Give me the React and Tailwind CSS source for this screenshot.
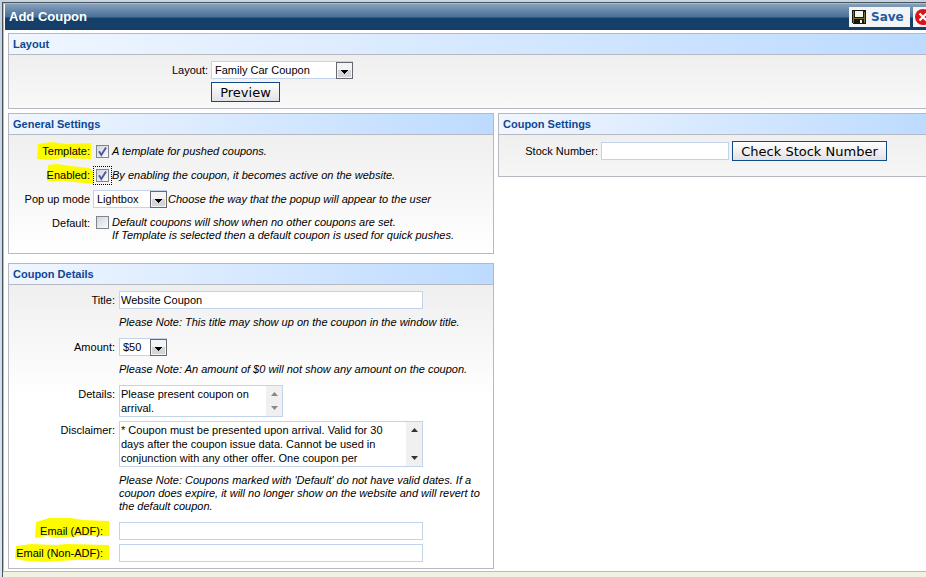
import React from "react";

function Panel({ title, className = "", bodyClass = "", children }) {
  return (
    <section className={"border border-[#b6b9bf] " + className}>
      <h2 className="flex h-[21px] items-center border-b border-[#b6b9bf] bg-linear-to-r from-[#f0f6ff] to-[#bddbff] px-1 text-[11px] font-bold text-[#0d4793]">
        {title}
      </h2>
      <div className={"bg-linear-to-b from-[#efefef] " + bodyClass}>{children}</div>
    </section>
  );
}

function Select({ id, value, className }) {
  return (
    <span className={"relative block h-[18px] shrink-0 " + className}>
      <select id={id} className="block h-full w-full appearance-none border border-[#c2d3ea] bg-white pl-[3px] text-[11px] text-black outline-none">
        <option>{value}</option>
      </select>
      <svg viewBox="0 0 17 17" className="pointer-events-none absolute right-0 top-px h-[17px] w-[17px]" shapeRendering="crispEdges">
        <rect x="0.5" y="0.5" width="16" height="16" fill="#f4f4f4" stroke="#66696f" />
        <path d="M2 8h13v7H2z" fill="#d3d5d8" />
        <path d="M5 8h7v1H5zM6 9h5v1H6zM7 10h3v1H7zM8 11h1v1H8z" fill="#000" />
      </svg>
    </span>
  );
}

function Checkbox({ id, checked, focused }) {
  return (
    <span className={"relative flex h-[19px] w-[19px] shrink-0 items-center justify-center border border-dotted " + (focused ? "border-black" : "border-transparent")}>
      <input id={id} type="checkbox" defaultChecked={checked} className="peer block h-[13px] w-[13px] appearance-none border border-[#7f858d] bg-linear-to-br from-[#d2d6df] to-[#fafafa] outline-none" />
      <svg viewBox="0 0 13 13" className="pointer-events-none absolute hidden h-[13px] w-[13px] peer-checked:block">
        <path d="M3 6.2 5.3 10 10 2.6" fill="none" stroke="#4a5a97" strokeWidth="1.9" />
      </svg>
    </span>
  );
}

function ScrollBar({ active }) {
  return (
    <span className={"flex w-4 shrink-0 flex-col items-center justify-between bg-[#f0f0f0] py-[6px] " + (active ? "text-[#333]" : "text-[#888]")}>
      <svg viewBox="0 0 7 4" className="h-1 w-[7px]"><path d="M0 4 3.5 0 7 4z" fill="currentColor" /></svg>
      <svg viewBox="0 0 7 4" className="h-1 w-[7px]"><path d="M0 0 3.5 4 7 0z" fill="currentColor" /></svg>
    </span>
  );
}

function TextArea({ id, value, active, className }) {
  return (
    <div className={"flex border border-[#c2d3ea] bg-white " + className}>
      <textarea id={id} defaultValue={value} className="block h-full min-w-0 flex-1 resize-none overflow-hidden px-px pt-px text-[11px] leading-[14px] outline-none" />
      <ScrollBar active={active} />
    </div>
  );
}

function Marker({ d, viewBox, className }) {
  return (
    <svg viewBox={viewBox} className={"absolute -z-10 " + className}>
      <path d={d} fill="#fdfb00" />
    </svg>
  );
}

function Note({ children, className = "" }) {
  return <p className={"text-[11px] italic leading-[13px] " + className}>{children}</p>;
}

const inputClass = "block h-[18px] border border-[#c2d3ea] bg-white px-px text-[11px] text-black outline-none";
const buttonClass = "block h-5 border border-[#114a8b] bg-linear-to-b from-white to-[#e2e2e6] pt-px text-[13px] leading-[18px] text-black font-['DejaVu_Sans',sans-serif]";
const generalLabel = "relative z-0 w-[81px] shrink-0 text-right leading-6";
const detailLabel = "relative z-0 w-[106px] shrink-0 text-right leading-[19px]";

export default function App() {
  return (
    <div className="flex min-h-screen flex-col overflow-hidden bg-linear-to-b from-[#c5d4e2] to-[#dbe5f2] pl-[2px] pt-[2px] text-[11px] text-black font-['Liberation_Sans',Arial,sans-serif]">
      <div className="flex flex-1 flex-col border-l border-t border-[#4a5358] bg-[#f1f1e1]">
        <main className="border-b border-l border-t border-[#b9bcbd] bg-white pb-[2px]">
          <header className="ml-px flex h-[26px] items-center justify-between overflow-hidden bg-linear-to-b from-[#86a0bd] from-0% via-[#4b7299] via-48% to-[#153f68] to-56% pl-1">
            <h1 className="text-[13px] font-bold text-white">Add Coupon</h1>
            <div className="flex h-5 gap-[3px]">
              <button className="flex h-5 w-[61px] items-center gap-[5px] bg-[#f2f4f6] pl-[3px] text-[12px] font-bold text-[#1f58a4] font-['DejaVu_Sans',sans-serif]">
                <svg viewBox="0 0 14 14" className="h-[14px] w-[14px] shrink-0" shapeRendering="crispEdges">
                  <path d="M0 0h14v14H1L0 13z" fill="#17170c" />
                  <path d="M1 1h1v12H1zM12 2h1v11h-1zM2 8h10v1H2z" fill="#74713a" />
                  <path d="M3 1h8v6H3z" fill="#f4f4ef" />
                  <path d="M8 10h2v3H8z" fill="#f4f4ef" />
                </svg>
                Save
              </button>
              <button aria-label="Close" className="flex h-5 w-[13px] items-center overflow-hidden bg-[#f2f4f6] pl-[2px]">
                <svg viewBox="0 0 16 16" className="h-4 w-4 shrink-0">
                  <circle cx="8" cy="8" r="8" fill="#df1118" />
                  <path d="m4.5 4.5 7 7m0-7-7 7" stroke="#fff" strokeWidth="2.2" />
                </svg>
              </button>
            </div>
          </header>

          <div className="pl-1 pt-[3px]">
            <Panel title="Layout" className="border-r-0" bodyClass="to-[#f8f8f8] pt-[6px] pb-[6px]">
              <div className="flex gap-[3px]">
                <label htmlFor="layout" className="w-[199px] shrink-0 text-right leading-[18px]">Layout:</label>
                <div className="flex flex-col items-start gap-[3px]">
                  <Select id="layout" value="Family Car Coupon" className="w-[142px]" />
                  <button className={buttonClass + " w-[69px]"}>Preview</button>
                </div>
              </div>
            </Panel>

            <div className="mt-1 flex items-start gap-1">
              <div className="flex w-[486px] shrink-0 flex-col gap-[9px]">
                <Panel title="General Settings" bodyClass="to-white pt-1 pb-[11px]">
                  <div className="flex h-6 items-center gap-[3px]">
                    <label htmlFor="template" className={generalLabel}>
                      Template:
                      <Marker viewBox="0 0 54 18" className="-right-px top-[3px] h-[18px] w-[54px]" d="M1 2 14 0 30 2 54 1V17L25 16 14 18 0 17z" />
                    </label>
                    <div className="flex items-center">
                      <Checkbox id="template" checked />
                      <Note>A template for pushed coupons.</Note>
                    </div>
                  </div>
                  <div className="flex h-6 items-center gap-[3px]">
                    <label htmlFor="enabled" className={generalLabel}>
                      Enabled:
                      <Marker viewBox="0 0 46 20" className="-right-[3px] top-px h-5 w-[46px]" d="M1 1 10 0 24 2 42 4 46 7V20L18 17H0z" />
                    </label>
                    <div className="flex items-center">
                      <Checkbox id="enabled" checked focused />
                      <Note>By enabling the coupon, it becomes active on the website.</Note>
                    </div>
                  </div>
                  <div className="flex h-6 items-center gap-[3px]">
                    <label htmlFor="popup" className={generalLabel}>Pop up mode</label>
                    <div className="flex items-center gap-px">
                      <Select id="popup" value="Lightbox" className="w-[74px]" />
                      <Note>Choose the way that the popup will appear to the user</Note>
                    </div>
                  </div>
                  <div className="flex items-start gap-[3px]">
                    <label htmlFor="default" className={generalLabel}>Default:</label>
                    <div className="flex items-start pt-[2px]">
                      <Checkbox id="default" />
                      <Note className="pt-[3px]">
                        Default coupons will show when no other coupons are set.
                        <br />
                        If Template is selected then a default coupon is used for quick pushes.
                      </Note>
                    </div>
                  </div>
                </Panel>

                <Panel title="Coupon Details" bodyClass="to-[40%] to-white pt-[6px] pb-[6px]">
                  <div className="flex gap-1">
                    <label htmlFor="title" className={detailLabel}>Title:</label>
                    <div>
                      <input id="title" defaultValue="Website Coupon" className={inputClass + " w-[304px]"} />
                      <Note className="mb-[9px] mt-[7px]">Please Note: This title may show up on the coupon in the window title.</Note>
                    </div>
                  </div>
                  <div className="flex gap-1">
                    <label htmlFor="amount" className={detailLabel}>Amount:</label>
                    <div>
                      <Select id="amount" value="$50" className="w-[48px]" />
                      <Note className="mb-[9px] mt-[7px]">Please Note: An amount of $0 will not show any amount on the coupon.</Note>
                    </div>
                  </div>
                  <div className="mb-1 flex gap-1">
                    <label htmlFor="details" className={detailLabel}>Details:</label>
                    <TextArea id="details" value="Please present coupon on arrival." className="h-8 w-[164px]" />
                  </div>
                  <div className="flex gap-1">
                    <label htmlFor="disclaimer" className={detailLabel}>Disclaimer:</label>
                    <div>
                      <TextArea id="disclaimer" active value="* Coupon must be presented upon arrival. Valid for 30 days after the coupon issue data. Cannot be used in conjunction with any other offer. One coupon per" className="h-[46px] w-[304px]" />
                      <Note className="mb-[9px] mt-[7px]">
                        Please Note: Coupons marked with 'Default' do not have valid dates. If a
                        <br />
                        coupon does expire, it will no longer show on the website and will revert to
                        <br />
                        the default coupon.
                      </Note>
                    </div>
                  </div>
                  <div className="mb-1 flex h-[18px] gap-1">
                    <label htmlFor="adf" className={detailLabel + " pr-3"}>
                      Email (ADF):
                      <Marker viewBox="0 0 74 20" className="right-[6px] -top-1 h-5 w-[74px]" d="M1 4 14 0 36 0 48 2 74 3V18L45 18 22 20 12 18 0 20z" />
                    </label>
                    <input id="adf" className={inputClass + " w-[304px]"} />
                  </div>
                  <div className="flex h-[18px] gap-1">
                    <label htmlFor="nonadf" className={detailLabel + " pr-3"}>
                      Email (Non-ADF):
                      <Marker viewBox="0 0 94 18" className="right-[6px] top-0 h-[18px] w-[94px]" d="M1 2 16 0 40 1 52 0 94 1V16L60 16 30 18 12 17 0 15z" />
                    </label>
                    <input id="nonadf" className={inputClass + " w-[304px]"} />
                  </div>
                </Panel>
              </div>

              <Panel title="Coupon Settings" className="min-w-0 flex-1 border-r-0" bodyClass="to-[#f6f6f6] pt-[6px] pb-[15px]">
                <div className="flex items-center gap-[3px]">
                  <label htmlFor="stock" className="w-[99px] shrink-0 text-right">Stock Number:</label>
                  <input id="stock" className={inputClass + " w-[128px]"} />
                  <button className={buttonClass + " w-[155px] shrink-0"}>Check Stock Number</button>
                </div>
              </Panel>
            </div>
          </div>
        </main>
      </div>
    </div>
  );
}
